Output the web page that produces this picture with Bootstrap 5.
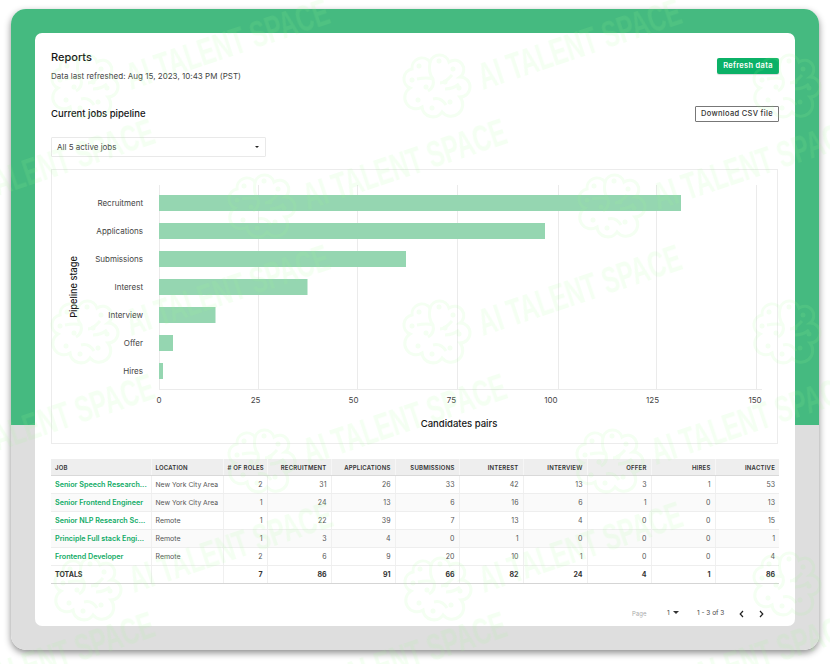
<!DOCTYPE html>
<html lang="en">
<head>
<meta charset="utf-8">
<title>Reports</title>
<link href="https://cdn.jsdelivr.net/npm/bootstrap@5.3.0/dist/css/bootstrap.min.css" rel="stylesheet">
<style>
html,body{height:664px;overflow:hidden;background:#fff}
body{font-family:Inter,"Liberation Sans",sans-serif;color:#222;padding:9px 11px 14px}
.frame{height:641px;padding:24px;border-radius:15px;background:linear-gradient(#45ba80 0 416px,#dedede 416px);box-shadow:0 3px 7px rgba(0,0,0,.45)}
.sheet{height:593px;background:#fff;border-radius:7px;padding:16px 16px 0}
.ttl{font-size:11px;font-weight:500;line-height:16px;color:#161616;margin:0}
.ttl-two{font-size:9.5px}
.sub{font-size:8px;line-height:12px;letter-spacing:.02px;color:#444;margin:5px 0 0}
.btn-go{font-size:7.5px;font-weight:600;letter-spacing:.3px;line-height:16px;height:16px;width:62px;margin-top:9px;padding:0;border:0;border-radius:2px;background:#0bb167;color:#fff;box-shadow:0 1px 1px rgba(0,0,0,.15)}
.btn-go:hover{background:#0bb167;color:#fff}
.head-two{margin-top:24px}
.btn-csv{font-size:7.5px;font-weight:500;letter-spacing:.3px;line-height:14px;height:16px;width:84px;padding:0;border:1px solid #777;border-radius:1px;background:#fff;color:#333}
.pick{width:215px;height:20px;margin-top:15px;padding:0 6px 0 5px;font-size:8px;letter-spacing:0;color:#444;border:1px solid #e9e9e9;border-radius:1px;background:#fff}
.pick::after{border-top-width:2.5px;border-left-width:2.5px;border-right-width:2.5px;color:#222;margin:0}
.chart-box{width:727px;height:275px;margin-top:12px;border:1px solid #ececec}
.chart-box svg{display:block;font-family:Inter,"Liberation Sans",sans-serif}
.tk{font-size:8px;fill:#444}
.axt{font-size:9.5px;font-weight:500;fill:#161616}
.axt-y{font-size:9.2px}
.grid-x{stroke:#ebebeb;stroke-width:1}
.bar-x{fill:#95d6b1}
.tbl{table-layout:fixed;width:728px;margin:15px 0 0;font-size:7px;color:#555}
.tbl th,.tbl td{padding:0 4px;height:18px;line-height:17px;border:0;border-bottom:1px solid #eee;border-right:1px solid #f0f0f0;text-align:right;white-space:nowrap;background:transparent;box-shadow:none;color:#555}
.tbl th:last-child,.tbl td:last-child{border-right:0}
.tbl thead th{height:16px;line-height:15px;background:#eee;border-bottom:1px solid #d9d9d9;border-right-color:#f6f6f6;color:#333;font-size:6px;font-weight:600;letter-spacing:.2px;text-transform:uppercase}
.tbl .tl{text-align:left;padding-right:0}
.tbl .loc{font-size:6.8px}
.tbl tbody tr:nth-child(even) td{background:#fafafa}
.tbl tbody td.jobn{color:#10ab66;font-weight:600;font-size:7.2px}
.tbl tfoot td{font-weight:700;color:#333;border-top:1px solid #ccc;border-bottom:1px solid #d5d5d5}
.cw-a{width:100px}.cw-b{width:72px}.cw-c{width:44px}.cw-d{width:64px}
.pager{margin-top:22px;height:16px;padding-right:8px;font-size:6.5px;color:#444}
.pg-lbl{color:#aaa;font-size:6px;width:35px}
.pg-num{width:30px}
.pg-num::after{content:"";display:inline-block;margin-left:3px;vertical-align:1px;border-top:3px solid #333;border-left:3px solid transparent;border-right:3px solid transparent}
.pg-cnt{width:34px}
.pg-ico{width:20px;height:12px;display:flex;justify-content:center;align-items:center}
.overlay{position:absolute;left:0;top:0;pointer-events:none}
.wm-t{font-family:"Liberation Sans",sans-serif;font-weight:700;font-size:37px}
</style>
</head>
<body>
<div class="frame">
  <div class="sheet">
    <div class="d-flex justify-content-between align-items-start">
      <div>
        <h1 class="ttl">Reports</h1>
        <p class="sub">Data last refreshed: Aug 15, 2023, 10:43 PM (PST)</p>
      </div>
      <button type="button" class="btn btn-go">Refresh data</button>
    </div>
    <div class="d-flex justify-content-between align-items-center head-two">
      <h2 class="ttl ttl-two mb-0">Current jobs pipeline</h2>
      <button type="button" class="btn btn-csv">Download CSV file</button>
    </div>
    <button type="button" class="btn pick dropdown-toggle d-flex justify-content-between align-items-center">All 5 active jobs</button>
    <div class="chart-box">
      <svg width="725" height="273" viewBox="52 170 725 273">
        <g class="grid-x">
          <path d="M159.5 185V389M258.5 185V389M357.5 185V389M457.5 185V389M558.5 185V389M656.5 185V389M756.5 185V389"/>
          <path d="M159 389.5H762"/>
        </g>
        <g class="bar-x">
          <rect x="159" y="195" width="522" height="16"/>
          <rect x="159" y="223" width="386" height="16"/>
          <rect x="159" y="251" width="247" height="16"/>
          <rect x="159" y="279" width="148.500" height="16"/>
          <rect x="159" y="307" width="56.500" height="16"/>
          <rect x="159" y="335" width="14" height="16"/>
          <rect x="159" y="363" width="4" height="16"/>
        </g>
        <g class="tk" text-anchor="end">
          <text x="143" y="206">Recruitment</text>
          <text x="143" y="234">Applications</text>
          <text x="143" y="262">Submissions</text>
          <text x="143" y="290">Interest</text>
          <text x="143" y="318">Interview</text>
          <text x="143" y="346">Offer</text>
          <text x="143" y="374">Hires</text>
        </g>
        <g class="tk" text-anchor="middle">
          <text x="159" y="403">0</text>
          <text x="255.500" y="403">25</text>
          <text x="353.500" y="403">50</text>
          <text x="451.500" y="403">75</text>
          <text x="551" y="403">100</text>
          <text x="652.500" y="403">125</text>
          <text x="755" y="403">150</text>
        </g>
        <text class="axt" x="459" y="427" text-anchor="middle">Candidates pairs</text>
        <text class="axt axt-y" transform="translate(77 287) rotate(-90)" text-anchor="middle">Pipeline stage</text>
      </svg>
    </div>
    <table class="table tbl">
      <colgroup>
        <col class="cw-a"><col class="cw-b"><col class="cw-c"><col class="cw-d"><col class="cw-d"><col class="cw-d"><col class="cw-d"><col class="cw-d"><col class="cw-d"><col class="cw-d"><col class="cw-d">
      </colgroup>
      <thead>
        <tr><th class="tl">Job</th><th class="tl">Location</th><th># of roles</th><th>Recruitment</th><th>Applications</th><th>Submissions</th><th>Interest</th><th>Interview</th><th>Offer</th><th>Hires</th><th>Inactive</th></tr>
      </thead>
      <tbody>
        <tr><td class="tl jobn">Senior Speech Research...</td><td class="tl loc">New York City Area</td><td>2</td><td>31</td><td>26</td><td>33</td><td>42</td><td>13</td><td>3</td><td>1</td><td>53</td></tr>
        <tr><td class="tl jobn">Senior Frontend Engineer</td><td class="tl loc">New York City Area</td><td>1</td><td>24</td><td>13</td><td>6</td><td>16</td><td>6</td><td>1</td><td>0</td><td>13</td></tr>
        <tr><td class="tl jobn">Senior NLP Research Sc...</td><td class="tl">Remote</td><td>1</td><td>22</td><td>39</td><td>7</td><td>13</td><td>4</td><td>0</td><td>0</td><td>15</td></tr>
        <tr><td class="tl jobn">Principle Full stack Engi...</td><td class="tl">Remote</td><td>1</td><td>3</td><td>4</td><td>0</td><td>1</td><td>0</td><td>0</td><td>0</td><td>1</td></tr>
        <tr><td class="tl jobn">Frontend Developer</td><td class="tl">Remote</td><td>2</td><td>6</td><td>9</td><td>20</td><td>10</td><td>1</td><td>0</td><td>0</td><td>4</td></tr>
      </tbody>
      <tfoot>
        <tr><td class="tl">TOTALS</td><td class="tl"></td><td>7</td><td>86</td><td>91</td><td>66</td><td>82</td><td>24</td><td>4</td><td>1</td><td>86</td></tr>
      </tfoot>
    </table>
    <div class="pager d-flex justify-content-end align-items-center">
      <span class="pg-lbl">Page</span>
      <span class="pg-num">1</span>
      <span class="pg-cnt">1 - 3 of 3</span>
      <span class="pg-ico"><svg width="5" height="8" viewBox="0 0 5 8"><path d="M4 1 1.200 4 4 7" fill="none" stroke="#222" stroke-width="1.200"/></svg></span>
      <span class="pg-ico"><svg width="5" height="8" viewBox="0 0 5 8"><path d="M1 1 3.800 4 1 7" fill="none" stroke="#222" stroke-width="1.200"/></svg></span>
    </div>
  </div>
</div>
<svg class="overlay" width="830" height="664" viewBox="0 0 830 664" aria-hidden="true">
  <defs>
    <g id="wm" opacity=".12">
      <g fill="none" stroke="#a0ff90" stroke-width="3">
        <path d="M-7-25A10 10 0 0 1 12-25A9 9 0 0 1 23-10A10 10 0 0 1 23 10A11 11 0 0 1 5 25A11 11 0 0 1-15 20A11 11 0 0 1-27 1A10 10 0 0 1-25-18A10 10 0 0 1-7-25Z"/>
        <path d="M-7-25Q-9-14-4-8Q-2 0-9 4M-20-8Q-10-10-4-8M15-12Q8-4 3-4M-4 12Q4 10 9 18M8 2Q16 2 22-3"/>
      </g>
      <g fill="#a0ff90">
        <circle cx="-18" cy="-21" r="2.500"/><circle cx="2" cy="-26" r="2.500"/><circle cx="16" cy="-18" r="2.500"/>
        <circle cx="-25" cy="-7" r="2.500"/><circle cx="8" cy="-5" r="2.500"/><circle cx="-11" cy="0" r="2.500"/>
        <circle cx="22" cy="1" r="2.500"/><circle cx="-19" cy="13" r="2.500"/><circle cx="13" cy="15" r="2.500"/><circle cx="-5" cy="21" r="2.500"/>
      </g>
      <text class="wm-t" fill="#a0ff90" x="0" y="0" textLength="212" lengthAdjust="spacingAndGlyphs" transform="translate(46 3) rotate(-18.500)">AI TALENT SPACE</text>
    </g>
  </defs>
  <use href="#wm" x="85" y="87"/><use href="#wm" x="437" y="87"/><use href="#wm" x="787" y="87"/>
  <use href="#wm" x="-90" y="207"/><use href="#wm" x="262" y="207"/><use href="#wm" x="612" y="207"/>
  <use href="#wm" x="85" y="333"/><use href="#wm" x="437" y="333"/><use href="#wm" x="787" y="333"/>
  <use href="#wm" x="-90" y="462"/><use href="#wm" x="262" y="462"/><use href="#wm" x="610" y="462"/>
  <use href="#wm" x="88" y="590"/><use href="#wm" x="438" y="590"/><use href="#wm" x="787" y="585"/>
  <use href="#wm" x="-90" y="700"/><use href="#wm" x="262" y="700"/><use href="#wm" x="612" y="700"/>
</svg>
<script src="https://cdn.jsdelivr.net/npm/bootstrap@5.3.0/dist/js/bootstrap.bundle.min.js"></script>
</body>
</html>
